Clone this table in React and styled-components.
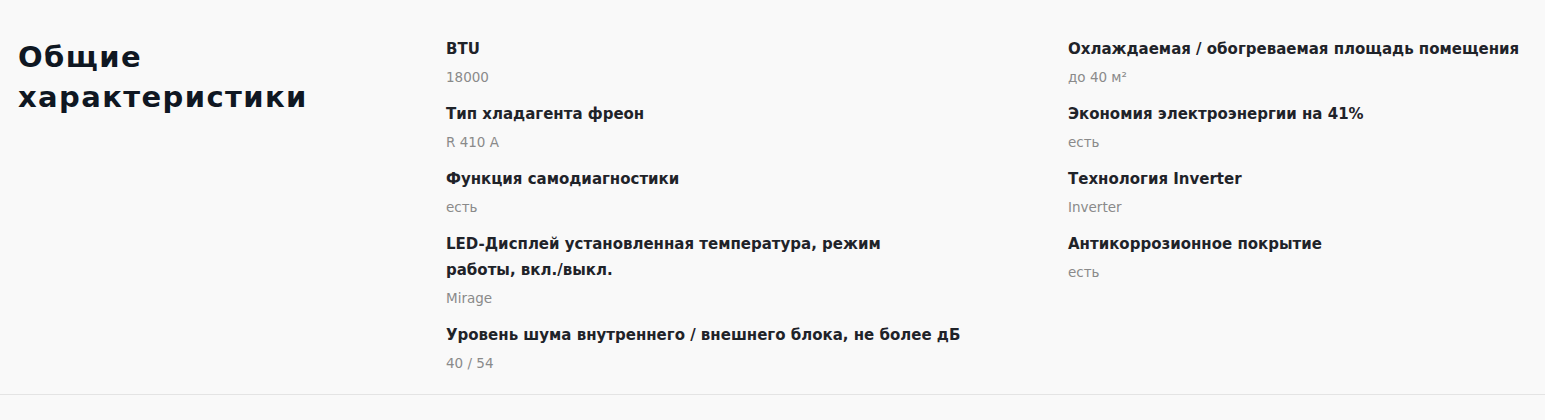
import React from "react";
import styled, { createGlobalStyle } from "styled-components";

const GlobalStyle = createGlobalStyle`
body {
  margin: 0;
  background: #f9f9f9;
  font-family: "DejaVu Sans", "Noto Sans", sans-serif;
}
`;

const Section = styled.section`
display: grid;
grid-template-columns: 328px 522px 1fr;
column-gap: 100px;
padding: 36px 18px 21px;
border-bottom: 1px solid #e4e4e4;
`;

const Title = styled.h2`
margin: 1px 0 0;
font-size: 29px;
line-height: 40px;
font-weight: 700;
letter-spacing: 1.4px;
color: #0f1722;
`;

const Column = styled.div`
display: flex;
flex-direction: column;
gap: 14px;
`;

const Item = styled.div`
display: flex;
flex-direction: column;
gap: 5px;
`;

const Label = styled.div`
max-width: ${props => props.$wrap ? props.$wrap + 'px' : 'none'};
font-size: 15px;
line-height: 26px;
font-weight: 700;
color: #1f2329;
`;

const Value = styled.div`
font-size: 13.5px;
line-height: 20px;
color: #8a8a8a;
`;

const leftSpecs = [
  { label: "BTU", value: "18000" },
  { label: "Тип хладагента фреон", value: "R 410 A" },
  { label: "Функция самодиагностики", value: "есть" },
  { label: "LED-Дисплей установленная температура, режим работы, вкл./выкл.", value: "Mirage", wrap: 470 },
  { label: "Уровень шума внутреннего / внешнего блока, не более дБ", value: "40 / 54" },
];

const rightSpecs = [
  { label: "Охлаждаемая / обогреваемая площадь помещения", value: "до 40 м²" },
  { label: "Экономия электроэнергии на 41%", value: "есть" },
  { label: "Технология Inverter", value: "Inverter" },
  { label: "Антикоррозионное покрытие", value: "есть" },
];

function SpecList({ specs }) {
  return (
    <Column>
      {specs.map(spec => (
        <Item key={spec.label}>
          <Label $wrap={spec.wrap}>{spec.label}</Label>
          <Value>{spec.value}</Value>
        </Item>
      ))}
    </Column>
  );
}

export default function App() {
  return (
    <>
      <GlobalStyle />
      <Section>
        <Title>Общие характеристики</Title>
        <SpecList specs={leftSpecs} />
        <SpecList specs={rightSpecs} />
      </Section>
    </>
  );
}
